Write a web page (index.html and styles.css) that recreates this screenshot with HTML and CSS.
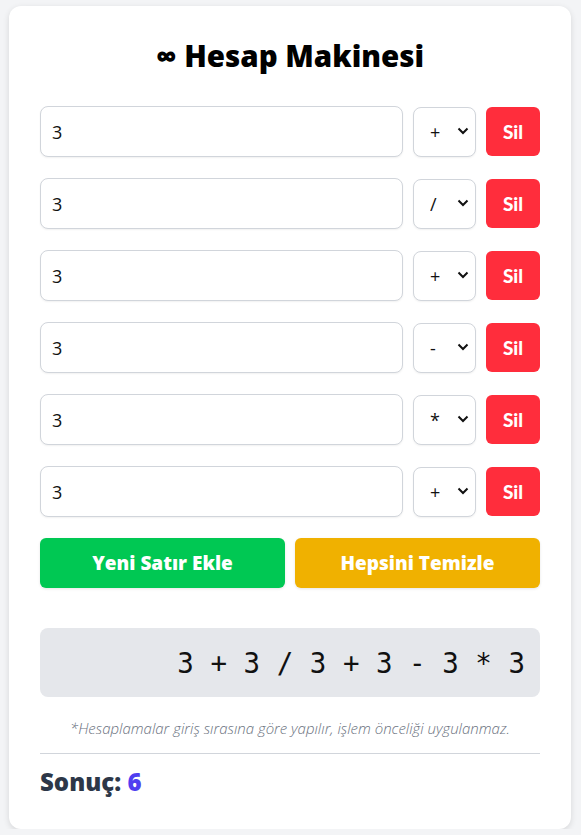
FILE: index.html
```html
<!DOCTYPE html>
<html lang="tr">
<head>
<meta charset="utf-8">
<title>Hesap Makinesi</title>
<link rel="stylesheet" href="styles.css">
</head>
<body>
<main class="card">
  <h1 class="title">∞ Hesap Makinesi</h1>
  <div class="rows">
    <div class="row">
      <input class="num" type="text" value="3">
      <div class="sel-wrap">
        <select class="op"><option>+</option></select>
        <svg class="chev" viewBox="0 0 12 8" width="12" height="8"><path d="M1.5 1.5 L6 6 L10.5 1.5" fill="none" stroke="#111" stroke-width="2"/></svg>
      </div>
      <button class="del">Sil</button>
    </div>
    <div class="row">
      <input class="num" type="text" value="3">
      <div class="sel-wrap">
        <select class="op"><option>/</option></select>
        <svg class="chev" viewBox="0 0 12 8" width="12" height="8"><path d="M1.5 1.5 L6 6 L10.5 1.5" fill="none" stroke="#111" stroke-width="2"/></svg>
      </div>
      <button class="del">Sil</button>
    </div>
    <div class="row">
      <input class="num" type="text" value="3">
      <div class="sel-wrap">
        <select class="op"><option>+</option></select>
        <svg class="chev" viewBox="0 0 12 8" width="12" height="8"><path d="M1.5 1.5 L6 6 L10.5 1.5" fill="none" stroke="#111" stroke-width="2"/></svg>
      </div>
      <button class="del">Sil</button>
    </div>
    <div class="row">
      <input class="num" type="text" value="3">
      <div class="sel-wrap">
        <select class="op"><option>-</option></select>
        <svg class="chev" viewBox="0 0 12 8" width="12" height="8"><path d="M1.5 1.5 L6 6 L10.5 1.5" fill="none" stroke="#111" stroke-width="2"/></svg>
      </div>
      <button class="del">Sil</button>
    </div>
    <div class="row">
      <input class="num" type="text" value="3">
      <div class="sel-wrap">
        <select class="op"><option>*</option></select>
        <svg class="chev" viewBox="0 0 12 8" width="12" height="8"><path d="M1.5 1.5 L6 6 L10.5 1.5" fill="none" stroke="#111" stroke-width="2"/></svg>
      </div>
      <button class="del">Sil</button>
    </div>
    <div class="row">
      <input class="num" type="text" value="3">
      <div class="sel-wrap">
        <select class="op"><option>+</option></select>
        <svg class="chev" viewBox="0 0 12 8" width="12" height="8"><path d="M1.5 1.5 L6 6 L10.5 1.5" fill="none" stroke="#111" stroke-width="2"/></svg>
      </div>
      <button class="del">Sil</button>
    </div>
  </div>
  <div class="actions">
    <button class="btn btn-add">Yeni Satır Ekle</button>
    <button class="btn btn-clear">Hepsini Temizle</button>
  </div>
  <div class="expr">3 + 3 / 3 + 3 - 3 * 3</div>
  <p class="note">*Hesaplamalar giriş sırasına göre yapılır, işlem önceliği uygulanmaz.</p>
  <hr class="sep">
  <div class="result">Sonuç: <span class="value">6</span></div>
</main>
</body>
</html>
```
FILE: styles.css
```css
* { box-sizing: border-box; }
html, body { margin: 0; padding: 0; }
body {
  background: #f3f4f6;
  font-family: "Open Sans", "Noto Sans", sans-serif;
  color: #111;
  padding: 6px 0 0 9px;
}
.card {
  width: 562px;
  background: #fff;
  border-radius: 12px;
  padding: 31px;
  box-shadow: 0 2px 6px rgba(0,0,0,0.12);
}
.title {
  margin: -2px 0 29px;
  text-align: center;
  font-size: 29.5px;
  line-height: 42px;
  font-weight: 800;
  color: #000;
}
.rows { display: flex; flex-direction: column; gap: 21px; }
.row { display: flex; gap: 10px; align-items: center; height: 51px; }
.num {
  flex: 1;
  height: 51px;
  border: 1px solid #d1d5db;
  border-radius: 8px;
  padding: 0 11px;
  font-family: "Open Sans", sans-serif;
  font-size: 18px;
  color: #111;
  box-shadow: 0 1px 2px rgba(0,0,0,0.06);
  outline: none;
}
.sel-wrap { position: relative; width: 63px; height: 50px; }
.op {
  appearance: none;
  -webkit-appearance: none;
  width: 63px;
  height: 50px;
  border: 1px solid #d1d5db;
  border-radius: 8px;
  background: #fff;
  padding: 0 0 0 16px;
  font-family: "Open Sans", sans-serif;
  font-size: 18px;
  color: #111;
  box-shadow: 0 1px 2px rgba(0,0,0,0.06);
}
.chev { position: absolute; right: 7px; top: 20px; pointer-events: none; }
.del {
  width: 54px;
  height: 49px;
  border: 0;
  border-radius: 6px;
  background: #ff2d3c;
  color: #fff;
  font-family: "Lato", "Open Sans", sans-serif;
  font-size: 19px;
  font-weight: 900;
  padding: 0;
}
.actions { display: flex; gap: 10px; margin-top: 21px; }
.btn {
  flex: 1;
  height: 50px;
  border: 0;
  border-radius: 6px;
  color: #fff;
  font-family: "Open Sans", sans-serif;
  font-size: 19px;
  font-weight: 800;
  box-shadow: 0 1px 3px rgba(0,0,0,0.1);
}
.btn-add { background: #00c853; }
.btn-clear { background: #f0b100; }
.expr {
  margin-top: 40px;
  height: 69px;
  background: #e5e7eb;
  border-radius: 8px;
  display: flex;
  align-items: center;
  justify-content: flex-end;
  padding: 0 15px;
  font-family: "DejaVu Sans Mono", "Liberation Mono", monospace;
  font-size: 27.5px;
  color: #111;
  white-space: pre;
}
.note {
  margin: 21px 0 0;
  text-align: center;
  font-size: 15px;
  line-height: 20px;
  font-style: italic;
  font-weight: 300;
  color: #6b7280;
}
.sep {
  margin: 15px 0 0;
  border: 0;
  border-top: 1px solid #d1d5db;
}
.result {
  margin-top: 12px;
  font-size: 24px;
  line-height: 32px;
  font-weight: 800;
  color: #2d3748;
}
.value { color: #4f3ff0; }
```
